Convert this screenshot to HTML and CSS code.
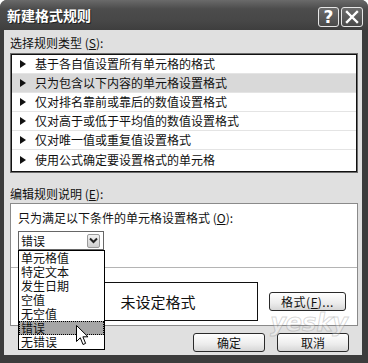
FILE: index.html
```html
<!DOCTYPE html>
<html lang="zh-CN">
<head>
    <meta charset="UTF-8">
    <link rel="stylesheet" href="styles.css">
    <title>新建格式规则</title>
</head>
<body>
    <div class="window">
        <div class="titlebar">
            <span class="title">新建格式规则</span>
            <div class="title-buttons">
                <span class="tbtn help">?</span>
                <span class="tbtn close">
                    <svg width="14" height="14" viewBox="0 0 14 14"><path d="M2 2 L12 12 M12 2 L2 12" stroke="#fff" stroke-width="2.4" stroke-linecap="square"/></svg>
                </span>
            </div>
        </div>

        <div class="frame">
            <div class="client">
                <div class="label">选择规则类型 (<u>S</u>):</div>
                <ul class="rule-list">
                    <li><i class="arrow"></i>基于各自值设置所有单元格的格式</li>
                    <li class="selected"><i class="arrow"></i>只为包含以下内容的单元格设置格式</li>
                    <li><i class="arrow"></i>仅对排名靠前或靠后的数值设置格式</li>
                    <li><i class="arrow"></i>仅对高于或低于平均值的数值设置格式</li>
                    <li><i class="arrow"></i>仅对唯一值或重复值设置格式</li>
                    <li class="last"><i class="arrow"></i>使用公式确定要设置格式的单元格</li>
                </ul>

                <div class="label label-gap">编辑规则说明 (<u>E</u>):</div>
                <div class="edit-box">
                    <div class="cond-label">只为满足以下条件的单元格设置格式 (<u>O</u>):</div>
                    <div class="combo">
                        <span class="combo-text">错误</span>
                        <span class="combo-btn">
                            <svg width="9" height="7" viewBox="0 0 9 7"><path d="M1 1.5 L4.5 5 L8 1.5" fill="none" stroke="#222" stroke-width="2"/></svg>
                        </span>
                        <ul class="combo-list">
                            <li>单元格值</li>
                            <li>特定文本</li>
                            <li>发生日期</li>
                            <li>空值</li>
                            <li>无空值</li>
                            <li class="hover">错误</li>
                            <li>无错误</li>
                        </ul>
                    </div>
                    <div class="separator"></div>
                    <div class="preview-row">
                        <span class="preview-label"></span>
                        <div class="preview">未设定格式</div>
                        <button class="btn format-btn">格式(<u>F</u>)...</button>
                    </div>
                </div>

                <div class="actions">
                    <button class="btn">确定</button>
                    <button class="btn">取消</button>
                </div>

                <div class="watermark">yesky</div>
            </div>
        </div>

        <svg class="cursor" width="13" height="21" viewBox="0 0 13 21">
            <path d="M0.5 0.5 L0.5 16.5 L4.3 12.8 L7 19.5 L9.6 18.4 L6.9 11.8 L12 11.8 Z" fill="#fff" stroke="#000" stroke-width="1"/>
        </svg>
    </div>
</body>
</html>
```

FILE: styles.css
```css
body {
    margin: 0;
    background: #fff;
    font-family: "Noto Sans CJK SC", "DejaVu Sans", sans-serif;
    font-size: 12px;
    line-height: 14px;
    color: #111;
}

ul {
    list-style: none;
    margin: 0;
    padding: 0;
}

.window {
    position: relative;
    width: 368px;
    height: 363px;
    background: #3c3c3c;
    border-radius: 7px 7px 0 0;
    overflow: hidden;
}

/* title bar */
.titlebar {
    height: 30px;
    display: flex;
    align-items: center;
    justify-content: space-between;
    padding: 0 5px 0 7px;
    box-sizing: border-box;
    background: linear-gradient(#6a6a6a, #4c4c4c 30%, #474747 70%, #3e3e3e);
}

.title {
    color: #fff;
    font-weight: bold;
    font-size: 14px;
    text-shadow: 1px 1px 0 #222;
}

.title-buttons {
    display: flex;
    gap: 2px;
    margin-top: 3px;
}

.tbtn {
    width: 21px;
    height: 20px;
    box-sizing: border-box;
    border: 1px solid #e6e6e6;
    border-radius: 3px;
    background: linear-gradient(#6c6c6c, #4a4a4a);
    color: #fff;
    display: flex;
    align-items: center;
    justify-content: center;
    font: bold 17px "DejaVu Sans", sans-serif;
}

.tbtn.close {
    width: 22px;
}

/* window frame */
.frame {
    padding: 0 6px 8px 4px;
}

.client {
    position: relative;
    height: 325px;
    box-sizing: border-box;
    padding: 6px 4px 3px 6px;
    background: #e0e0e0;
}

.label {
    height: 14px;
}

.label-gap {
    margin-top: 14px;
}

/* rule type list */
.rule-list {
    margin-top: 3px;
    height: 120px;
    box-sizing: border-box;
    border: 1px solid #6c6c6c;
    box-shadow: inset 0 0 0 1px #111;
    padding: 1px 1px 2px;
    background: #fff;
}

.rule-list li {
    height: 19px;
    box-sizing: border-box;
    border-bottom: 1px solid #e4e4e4;
    display: flex;
    align-items: center;
    padding-left: 8px;
}

.rule-list li.selected {
    background: #d9d9d9;
}

.rule-list li.last {
    border-bottom: none;
}

.arrow {
    width: 0;
    height: 0;
    border-left: 6px solid #111;
    border-top: 4px solid transparent;
    border-bottom: 4px solid transparent;
    margin-right: 9px;
}

/* rule description box */
.edit-box {
    margin-top: 2px;
    height: 123px;
    box-sizing: border-box;
    border: 1px solid #8a8a8a;
    background: #fff;
    padding: 7px 0 0 7px;
}

.cond-label {
    height: 14px;
}

.combo {
    position: relative;
    margin-top: 6px;
    width: 86px;
    height: 19px;
    box-sizing: border-box;
    border: 1px solid #666;
    display: flex;
    align-items: center;
    justify-content: space-between;
    padding: 0 3px 0 2px;
    z-index: 2;
}

.combo-btn {
    width: 13px;
    height: 14px;
    box-sizing: border-box;
    border: 1px solid #9a9a9a;
    border-radius: 2px;
    background: linear-gradient(#f2f2f2, #cfcfcf);
    display: flex;
    align-items: center;
    justify-content: center;
}

.combo-list {
    position: absolute;
    top: 18px;
    left: -1px;
    width: 87px;
    box-sizing: border-box;
    border: 1px solid #000;
    background: #fff;
}

.combo-list li {
    height: 14px;
    line-height: 14px;
    padding-left: 2px;
    font-size: 12px;
}

.combo-list li.hover {
    background: #a6a6a6;
    outline: 1px dotted #000;
    outline-offset: -1px;
}

.separator {
    margin: 17px 0 0 -7px;
    height: 1px;
    background: #b4b4b4;
}

.preview-row {
    display: flex;
    align-items: flex-start;
    margin-top: 14px;
}

.preview-label {
    width: 40px;
}

.preview {
    width: 200px;
    height: 39px;
    box-sizing: border-box;
    border: 1px solid #111;
    display: flex;
    align-items: center;
    justify-content: center;
    font-size: 15px;
}

/* buttons */
.btn {
    width: 72px;
    height: 19px;
    box-sizing: border-box;
    padding: 0;
    border: 1px solid #2a2a2a;
    border-radius: 3px;
    background: linear-gradient(#ffffff, #ececec 60%, #d6d6d6);
    font-family: inherit;
    font-size: 12px;
    line-height: 14px;
    color: #111;
}

.format-btn {
    width: 77px;
    margin: 10px 0 0 11px;
    letter-spacing: 0.5px;
}

.actions {
    display: flex;
    justify-content: flex-end;
    gap: 12px;
    margin-top: 7px;
    padding-right: 9px;
}

.watermark {
    position: absolute;
    right: 14px;
    bottom: 18px;
    font: italic bold 24px "DejaVu Sans", sans-serif;
    color: rgba(255, 255, 255, 0.3);
    -webkit-text-stroke: 1px rgba(120, 120, 120, 0.3);
    pointer-events: none;
}

.cursor {
    position: absolute;
    left: 76px;
    top: 325px;
    z-index: 5;
}
```
